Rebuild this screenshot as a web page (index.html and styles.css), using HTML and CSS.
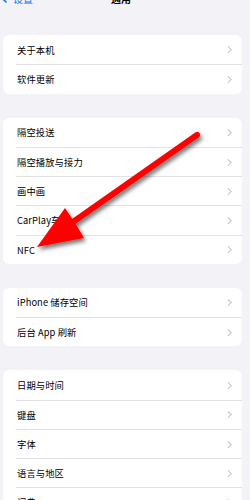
FILE: index.html
```html
<!DOCTYPE html>
<html lang="zh">
<head>
<meta charset="utf-8">
<link rel="stylesheet" href="styles.css">
</head>
<body>
<div class="page">
  <header class="nav">
    <div class="nav-row">
      <span class="back"><svg class="back-icon" width="6" height="10" viewBox="0 0 6 10"><path d="M5 1L1 5l4 4" fill="none" stroke="#007aff" stroke-width="1.6" stroke-linecap="round" stroke-linejoin="round"/></svg>设置</span>
      <span class="title">通用</span>
    </div>
  </header>
  <main class="groups">
    <section class="card">
      <div class="row"><span>关于本机</span><i class="chev"></i></div>
      <div class="row"><span>软件更新</span><i class="chev"></i></div>
    </section>
    <section class="card">
      <div class="row"><span>隔空投送</span><i class="chev"></i></div>
      <div class="row"><span>隔空播放与接力</span><i class="chev"></i></div>
      <div class="row"><span>画中画</span><i class="chev"></i></div>
      <div class="row"><span>CarPlay车载</span><i class="chev"></i></div>
      <div class="row"><span>NFC</span><i class="chev"></i></div>
    </section>
    <section class="card">
      <div class="row"><span>iPhone 储存空间</span><i class="chev"></i></div>
      <div class="row"><span>后台 App 刷新</span><i class="chev"></i></div>
    </section>
    <section class="card">
      <div class="row"><span>日期与时间</span><i class="chev"></i></div>
      <div class="row"><span>键盘</span><i class="chev"></i></div>
      <div class="row"><span>字体</span><i class="chev"></i></div>
      <div class="row"><span>语言与地区</span><i class="chev"></i></div>
      <div class="row"><span>词典</span><i class="chev"></i></div>
    </section>
  </main>
  <svg class="arrow" width="250" height="500" viewBox="0 0 250 500">
    <defs>
      <filter id="sh" x="-20%" y="-20%" width="140%" height="140%">
        <feGaussianBlur in="SourceAlpha" stdDeviation="2.2"/>
        <feOffset dx="2" dy="3" result="b"/>
        <feComponentTransfer><feFuncA type="linear" slope="0.55"/></feComponentTransfer>
        <feMerge><feMergeNode/><feMergeNode in="SourceGraphic"/></feMerge>
      </filter>
    </defs>
    <g filter="url(#sh)">
      <line x1="73" y1="222" x2="197" y2="135" stroke="#ff0000" stroke-width="6" stroke-linecap="round"/>
      <path fill="#ff0000" d="M37 247 L65 208 L72.2 218.7 L75.6 223.7 L84 238 Z"/>
    </g>
  </svg>
</div>
</body>
</html>
```
FILE: styles.css
```css
* { box-sizing: border-box; }
html, body { margin: 0; padding: 0; }
body {
  background: #f2f2f7;
  font-family: "Noto Sans CJK SC", "Noto Sans", sans-serif;
  color: #000;
}
.page {
  position: relative;
  width: 250px;
  height: 500px;
  overflow: hidden;
}
.nav {
  height: 35px;
  overflow: hidden;
}
.nav-row {
  margin-top: -9px;
  height: 14px;
  display: flex;
  align-items: center;
  position: relative;
  font-size: 10px;
}
.back {
  display: flex;
  align-items: center;
  gap: 6px;
  color: #007aff;
  padding-left: 1px;
}
.title {
  margin-left: 78px;
  font-weight: 600;
}
.groups {
  display: flex;
  flex-direction: column;
  gap: 24px;
  margin: 0 8px 0 3px;
}
.card {
  background: #fff;
  border-radius: 6px;
  overflow: hidden;
}
.row {
  height: 29.25px;
  display: flex;
  align-items: center;
  justify-content: space-between;
  margin-left: 13px;
  padding: 0 11px 0 1px;
  font-size: 9.3px;
  letter-spacing: 0.1px;
}
.row + .row {
  border-top: 0.75px solid #e2e2e6;
}
.chev {
  width: 4.5px;
  height: 4.5px;
  border-right: 1.2px solid #c4c4c8;
  border-top: 1.2px solid #c4c4c8;
  transform: rotate(45deg);
  margin-right: 1px;
}
.arrow {
  position: absolute;
  left: 0;
  top: 0;
  pointer-events: none;
}
```
